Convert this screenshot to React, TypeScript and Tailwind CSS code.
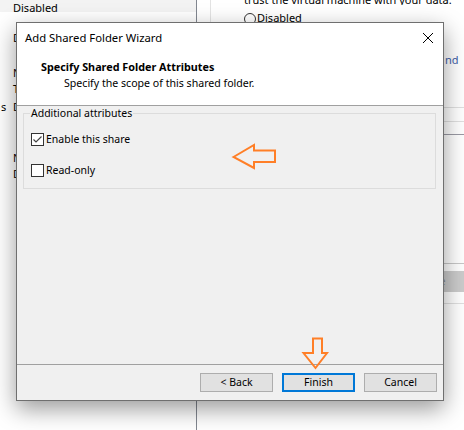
import React from "react";

const font = { fontFamily: '"Noto Sans", "Segoe UI", sans-serif' };

function Checkbox({ checked }: { checked: boolean }) {
  return (
    <span className="w-[13px] h-[13px] border border-[#333333] bg-white flex items-center justify-center shrink-0">
      {checked && (
        <svg width="11" height="11" viewBox="0 0 11 11">
          <path d="M1.5 5.5 L4 8 L9.5 2.5" fill="none" stroke="#444444" strokeWidth="1.2" />
        </svg>
      )}
    </span>
  );
}

function Btn({ label, primary }: { label: string; primary?: boolean }) {
  return (
    <div
      className={
        "w-[73px] h-[19px] flex items-center justify-center text-[10.5px] text-black bg-[#e1e1e1] " +
        (primary ? "border-2 border-[#0078d7]" : "border border-[#adadad]")
      }
    >
      {label}
    </div>
  );
}

export default function App() {
  return (
    <div className="relative w-[464px] h-[430px] bg-white overflow-hidden text-[10.5px] text-black" style={font}>
      {/* background application */}
      <div className="flex h-full">
        <div className="w-[196px] flex flex-col text-[11px]">
          <div className="h-[12px] bg-[#f3f3f3] pl-[13px] leading-[10px] overflow-hidden flex items-end">
            <span className="-mb-[1px]">Disabled</span>
          </div>
          <div className="pl-[13px] mt-[19px] leading-[14px]">D</div>
          <div className="pl-[13px] mt-[21px] leading-[14px]">N</div>
          <div className="pl-[13px] mt-[2px] leading-[14px]">T</div>
          <div className="flex mt-[4px] leading-[14px]">
            <span className="w-[9px] pl-[1px]">s</span>
            <span className="ml-[4px]">D</span>
          </div>
          <div className="pl-[13px] mt-[37px] leading-[14px]">N</div>
          <div className="pl-[13px] mt-[2px] leading-[14px]">D</div>
        </div>
        <div className="w-px bg-[#828790]" />
        <div className="w-[13px]" />
        <div className="w-px h-[60px] bg-[#e3e3e3]" />
        <div className="flex-1 flex flex-col text-[11px]">
          <div className="pl-[33px] h-[5px] leading-[0px] overflow-hidden whitespace-nowrap">
            trust the virtual machine with your data.
          </div>
          <div className="pl-[33px] mt-[7px] flex items-center gap-[1px] h-[13px]">
            <span className="w-[12px] h-[12px] rounded-full border border-[#333] bg-white" />
            <span>Disabled</span>
          </div>
          <div className="mt-[28px] pl-[234px] text-[#3d5ea8] leading-[14px] whitespace-nowrap">nd</div>
          <div className="mt-[40px] h-px bg-[#e0e0e0]" />
          <div className="mt-[13px] h-px bg-[#e0e0e0]" />
          <div className="mt-[12px] h-px bg-[#9a9aa4]" />
          <div className="mt-[128px] h-px bg-[#c8c8c8]" />
          <div className="mt-[7px] h-[21px] bg-[#cccccc] flex items-center pl-[224px] text-[#888] whitespace-nowrap">
            re
          </div>
          <div className="mt-[11px] h-px bg-[#e0e0e0]" />
        </div>
      </div>

      {/* dialog window */}
      <div className="absolute left-[16px] top-[22px] w-[428px] h-[379px] border border-[#6f6f6f] bg-[#f0f0f0] flex flex-col shadow-[0_8px_22px_rgba(0,0,0,0.4)]">
        <div className="bg-white h-[82px] flex flex-col">
          <div className="h-[30px] flex items-center justify-between pl-[8px] pr-[9px]">
            <span className="text-[11.3px]">Add Shared Folder Wizard</span>
            <svg width="12" height="12" viewBox="0 0 12 12">
              <path d="M1 1 L11 11 M11 1 L1 11" stroke="#000" strokeWidth="1" />
            </svg>
          </div>
          <div className="pl-[24px] mt-[6px] font-bold leading-[16px] text-[10.8px]">Specify Shared Folder Attributes</div>
          <div className="pl-[47px] leading-[16px] text-[10.6px]">Specify the scope of this shared folder.</div>
        </div>
        <div className="h-px bg-[#a0a0a0]" />
        <div className="flex-1 px-[6px] pt-[7px]">
          <div className="relative border border-[#dcdcdc] h-[76px] mr-[1px] flex flex-col pl-[7px] pt-[18px] gap-[17px]">
            <span className="absolute left-[6px] -top-[8px] bg-[#f0f0f0] px-[1px] leading-[14px]">Additional attributes</span>
            <label className="flex items-center gap-[2px] leading-[14px]">
              <Checkbox checked />
              <span>Enable this share</span>
            </label>
            <label className="flex items-center gap-[2px] leading-[14px]">
              <Checkbox checked={false} />
              <span>Read-only</span>
            </label>
          </div>
        </div>
        <div className="h-px bg-[#a0a0a0]" />
        <div className="h-[35px] flex items-start justify-end gap-[9px] pr-[6px] pt-[8px]">
          <Btn label="< Back" />
          <Btn label="Finish" primary />
          <Btn label="Cancel" />
        </div>
      </div>

      {/* annotation arrows */}
      <svg className="absolute left-0 top-0" width="464" height="430" viewBox="0 0 464 430">
        <polygon
          points="233.5,157 254,145 254,150.5 275,150.5 275,162 254,162 254,168"
          fill="none"
          stroke="#ff7f27"
          strokeWidth="2"
        />
        <polygon
          points="313,338.5 322,338.5 322,353 327,353 315.5,368 303.5,353 313,353"
          fill="none"
          stroke="#ff7f27"
          strokeWidth="2"
        />
      </svg>
    </div>
  );
}
